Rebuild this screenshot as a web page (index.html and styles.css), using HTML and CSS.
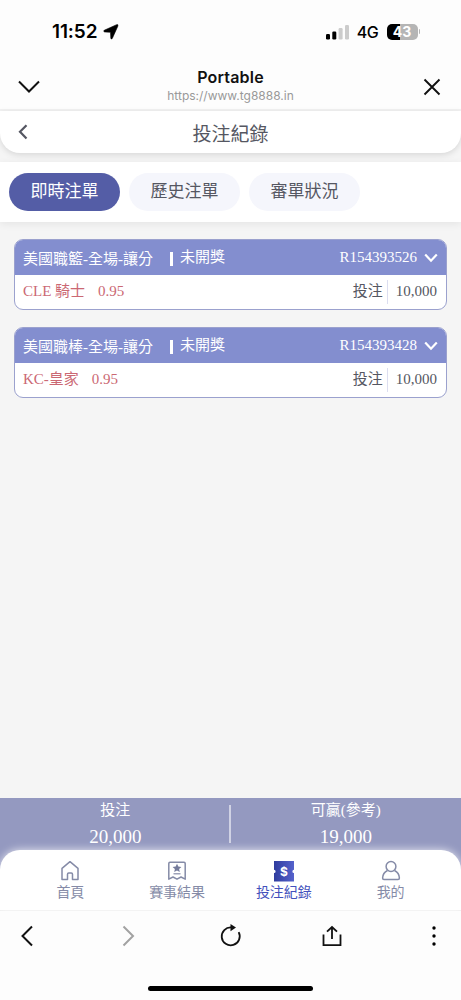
FILE: index.html
```html
<!DOCTYPE html>
<html lang="zh-Hant">
<head>
  <meta charset="UTF-8" />
  <meta name="viewport" content="width=device-width, initial-scale=1" />
  <title>投注紀錄</title>
  <link rel="stylesheet" href="styles.css">
</head>
<body>

  <div class="statusBar">
    <div class="clock">11:52</div>
    <svg class="location" width="16" height="16" viewBox="0 0 16 16"><path d="M1.200 6.300 13.600 .7Q15.400 .2 14.900 2L9.300 14.400Q8.300 15.800 7.800 14.200L7.500 8.300 1.500 7.900Q0 7.300 1.200 6.300Z" fill="#000" stroke="#000" stroke-width=".6"/></svg>
    <svg class="signal" width="23" height="16" viewBox="0 0 23 16">
      <rect x="0" y="10" width="4" height="5.500" rx="1.200"/>
      <rect x="6.300" y="7.500" width="4" height="8" rx="1.200"/>
      <rect x="12.600" y="4" width="4" height="11.500" rx="1.200" fill="#ccc"/>
      <rect x="19" y="1" width="4" height="14.500" rx="1.200" fill="#ccc"/>
    </svg>
    <div class="network">4G</div>
    <div class="battery">43</div>
    <div class="batteryTip"></div>
  </div>

  <header class="browserTop">
    <svg width="22" height="14" viewBox="0 0 22 14"><path d="M1 2.500 11 12.500 21 2.500" fill="none" stroke="#111" stroke-width="2"/></svg>
    <div class="siteInfo">
      <div class="siteName">Portable</div>
      <div class="siteUrl">https://www.tg8888.in</div>
    </div>
    <svg width="22" height="20" viewBox="0 0 22 20"><path d="M3.500 3.500 18.500 18.500M18.500 3.500 3.500 18.500" fill="none" stroke="#111" stroke-width="1.900"/></svg>
  </header>

  <main class="pagina">
    <div class="titleBar">
      <svg width="10" height="16" viewBox="0 0 10 16"><path d="M8.500 1.200 2 7.800 8.500 14.400" fill="none" stroke="#555762" stroke-width="2.200"/></svg>
      <h1>投注紀錄</h1>
    </div>

    <div class="tabs">
      <div class="tab activo">即時注單</div>
      <div class="tab">歷史注單</div>
      <div class="tab">審單狀況</div>
    </div>

    <section class="lista">
      <div class="ticket">
        <div class="ticketHead">
          <span class="liga">美國職籃-全場-讓分</span>
          <span class="estado">未開獎</span>
          <span class="numero">R154393526</span>
          <svg width="14" height="10" viewBox="0 0 14 10"><path d="M1.200 1.500 7 7.700 12.800 1.500" fill="none" stroke="#fff" stroke-width="2.200"/></svg>
        </div>
        <div class="ticketBody">
          <span class="equipo">CLE 騎士</span>
          <span class="cuota">0.95</span>
          <span class="etiqueta">投注</span>
          <span class="monto">10,000</span>
        </div>
      </div>

      <div class="ticket">
        <div class="ticketHead">
          <span class="liga">美國職棒-全場-讓分</span>
          <span class="estado">未開獎</span>
          <span class="numero">R154393428</span>
          <svg width="14" height="10" viewBox="0 0 14 10"><path d="M1.200 1.500 7 7.700 12.800 1.500" fill="none" stroke="#fff" stroke-width="2.200"/></svg>
        </div>
        <div class="ticketBody">
          <span class="equipo">KC-皇家</span>
          <span class="cuota">0.95</span>
          <span class="etiqueta">投注</span>
          <span class="monto">10,000</span>
        </div>
      </div>
    </section>

    <div class="totales">
      <div class="total">
        <div class="totalLabel">投注</div>
        <div class="totalValor">20,000</div>
      </div>
      <div class="total">
        <div class="totalLabel">可贏(參考)</div>
        <div class="totalValor">19,000</div>
      </div>
    </div>

    <nav class="menu">
      <div class="menuItem">
        <svg width="22" height="22" viewBox="0 0 22 22"><path d="M3 8.300 11 1.700 19 8.300V19.500H13.500V14.200Q13.500 13 12.300 13H9.700Q8.500 13 8.500 14.200V19.500H3Z" fill="none" stroke="#858ba7" stroke-width="1.500" stroke-linejoin="round"/></svg>
        <span>首頁</span>
      </div>
      <div class="menuItem">
        <svg width="22" height="22" viewBox="0 0 22 22"><path d="M4 2.200H18Q19.200 2.200 19.200 3.400V19.200L15 17 11 19.200 7 17 2.800 19.200V3.400Q2.800 2.200 4 2.200Z" fill="none" stroke="#858ba7" stroke-width="1.500" stroke-linejoin="round"/><path d="M11 3.800 12.300 6.600 15.400 7 13.100 9 13.800 12 11 10.500 8.200 12 8.900 9 6.600 7 9.700 6.600Z" fill="#747b9b"/><path d="M7.500 13.800H14.500" stroke="#858ba7" stroke-width="1.200"/></svg>
        <span>賽事結果</span>
      </div>
      <div class="menuItem activo">
        <svg width="22" height="22" viewBox="0 0 22 22">
          <defs><linearGradient id="ticketFondo" x1="0" y1="0" x2="1" y2="0"><stop offset="0" stop-color="#2f3c9e"/><stop offset="1" stop-color="#5562cc"/></linearGradient></defs>
          <path d="M1 1H21V9.800A1.600 1.600 0 0 0 21 13V21.500H1V13A1.600 1.600 0 0 0 1 9.800Z" fill="url(#ticketFondo)"/>
          <text x="11" y="15.500" text-anchor="middle" class="dolar">$</text>
        </svg>
        <span>投注紀錄</span>
      </div>
      <div class="menuItem">
        <svg width="22" height="22" viewBox="0 0 22 22"><circle cx="11" cy="6.500" r="4.900" fill="none" stroke="#858ba7" stroke-width="1.500"/><path d="M7.500 10.500Q2.800 12.800 2.600 18Q2.600 19.500 4 19.500H18Q19.400 19.500 19.400 18Q19.200 12.800 14.500 10.500" fill="none" stroke="#858ba7" stroke-width="1.500"/></svg>
        <span>我的</span>
      </div>
    </nav>
  </main>

  <footer class="browserBottom">
    <div class="botones">
      <svg width="24" height="24" viewBox="0 0 24 24"><path d="M17 2.500 7.500 12 17 21.500" fill="none" stroke="#111" stroke-width="2"/></svg>
      <svg width="24" height="24" viewBox="0 0 24 24"><path d="M6.500 2.500 16 12 6.500 21.500" fill="none" stroke="#a2a2a2" stroke-width="2"/></svg>
      <svg width="24" height="24" viewBox="0 0 24 24"><path d="M12.500 3.400A9 9 0 1 0 19.700 8.200" fill="none" stroke="#111" stroke-width="1.800"/><path d="M11.500 0 17 3.500 11.500 7.200Z" fill="#111"/></svg>
      <svg width="24" height="24" viewBox="0 0 24 24"><path d="M3.500 10.500V21.200H20.500V10.500M12 15V3.500M7 7.700 12 3 17 7.700" fill="none" stroke="#111" stroke-width="1.800"/></svg>
      <svg width="24" height="24" viewBox="0 0 24 24"><circle cx="12" cy="4" r="1.700"/><circle cx="12" cy="12" r="1.700"/><circle cx="12" cy="20" r="1.700"/></svg>
    </div>
    <div class="homeBar"></div>
  </footer>

</body>
</html>
```
FILE: styles.css
```css
* {
  box-sizing: border-box;
}
body {
  margin: 0;
  height: 1000px;
  display: flex;
  flex-direction: column;
  background-color: #fdfdfd;
  color: #555762;
  font-family: "Liberation Serif", "Noto Sans CJK TC", serif;
  overflow: hidden;
}
svg {
  display: block;
  flex: none;
}

/* barra de estado */
.statusBar {
  height: 63px;
  display: flex;
  align-items: center;
  padding: 0 41px 0 52px;
  font-family: Inter, sans-serif;
  color: #000;
}
.clock {
  font-size: 19px;
  font-weight: 600;
  letter-spacing: -0.1px;
}
.location {
  margin-left: 6px;
}
.signal {
  margin-left: auto;
}
.network {
  margin-left: 8px;
  font-size: 16px;
  font-weight: 500;
  letter-spacing: -0.3px;
}
.battery {
  width: 31px;
  height: 16px;
  margin-left: 8px;
  border-radius: 5px;
  background: linear-gradient(90deg, #000 43%, #b5b5b5 43%);
  color: #fff;
  font-size: 14px;
  font-weight: 700;
  line-height: 16px;
  text-align: center;
}
.batteryTip {
  width: 1.5px;
  height: 5px;
  margin-left: 1px;
  border-radius: 0 2px 2px 0;
  background-color: #b5b5b5;
}

/* cabecera del navegador */
.browserTop {
  height: 48px;
  display: flex;
  align-items: center;
  justify-content: space-between;
  padding: 0 18px;
  border-bottom: 2px solid #f2f2f2;
  font-family: Inter, sans-serif;
}
.siteInfo {
  text-align: center;
}
.siteName {
  color: #111;
  font-size: 16px;
  font-weight: 600;
  line-height: 19px;
  letter-spacing: 0.2px;
}
.siteUrl {
  color: #999;
  font-size: 12px;
  line-height: 17px;
}

.pagina {
  height: 799px;
  display: flex;
  flex-direction: column;
  background-color: #f5f5f5;
}
.titleBar {
  height: 42px;
  display: flex;
  align-items: center;
  padding: 0 18px;
  background-color: #fff;
  border-radius: 0 0 20px 20px;
  box-shadow: 0 2px 6px rgba(0, 0, 0, 0.12);
}
.titleBar h1 {
  flex: 1;
  margin: 6px 10px 0 0;
  text-align: center;
  font-size: 19px;
  font-weight: 400;
  line-height: 28px;
}

.tabs {
  height: 60px;
  margin-top: 9px;
  padding: 11px 9px;
  display: flex;
  gap: 9px;
  background-color: #fff;
  box-shadow: 0 2px 8px rgba(0, 0, 0, 0.07);
}
.tab {
  width: 111px;
  height: 38px;
  border-radius: 19px;
  background-color: #f5f6fc;
  font-size: 17px;
  line-height: 38px;
  text-align: center;
}
.tab.activo {
  background-color: #545da6;
  color: #fff;
}

/* apuestas */
.lista {
  flex: 1;
  display: flex;
  flex-direction: column;
  gap: 17px;
  padding: 17px 14px;
}
.ticket {
  height: 71px;
  border: 1px solid #9ba1ce;
  border-radius: 9px;
  background-color: #fff;
  overflow: hidden;
  font-size: 15px;
}
.ticketHead {
  height: 35px;
  display: flex;
  align-items: center;
  padding: 0 8px;
  background-color: #838ecf;
  color: #fff;
}
.liga {
  line-height: 22px;
  margin-top: 2px;
}
.estado {
  display: flex;
  align-items: center;
  gap: 7px;
  margin-left: 17px;
  margin-top: -1px;
  line-height: 22px;
}
.estado::before {
  content: "";
  width: 3px;
  height: 14px;
  margin-top: 4px;
  background-color: #fff;
}
.numero {
  margin-left: auto;
  margin-right: 7px;
}
.ticketBody {
  height: 34px;
  display: flex;
  align-items: center;
  padding: 0 9px 0 8px;
  line-height: 24px;
}
.equipo, .cuota {
  margin-top: -2px;
  color: #cb6873;
}
.cuota {
  margin-left: 13px;
}
.etiqueta {
  margin-left: auto;
  margin-top: -3px;
}
.monto {
  height: 24px;
  margin-left: 4px;
  padding-left: 8px;
  border-left: 1px solid #dcdef0;
  line-height: 23px;
}

/* totales */
.totales {
  height: 72px;
  margin-bottom: -20px;
  display: flex;
  background-color: #9499c0;
  color: #fff;
}
.total {
  flex: 1;
  text-align: center;
}
.total:first-child {
  background: linear-gradient(#d0d2e4, #d0d2e4) right 7px / 2px 38px no-repeat;
}
.totalLabel {
  height: 24px;
  font-size: 15px;
  line-height: 25px;
}
.totalValor {
  font-size: 19px;
  line-height: 30px;
}
.menu {
  position: relative;
  height: 60px;
  display: flex;
  padding: 10px 17px 0;
  background-color: #fff;
  border-radius: 20px 20px 0 0;
  box-shadow: 0 0 8px rgba(255, 255, 255, 0.8);
}
.menuItem {
  flex: 1;
  display: flex;
  flex-direction: column;
  align-items: center;
  color: #858ba7;
  font-size: 14px;
  line-height: 21px;
}
.menuItem.activo {
  color: #4350bc;
}
.dolar {
  font-family: Inter, sans-serif;
  font-size: 12px;
  font-weight: 700;
  fill: #fff;
}

.browserBottom {
  height: 90px;
  border-top: 1px solid #ededed;
}
.botones {
  display: flex;
  justify-content: space-between;
  padding: 13px 15px 0;
}
.homeBar {
  width: 165px;
  height: 5px;
  margin: 38px auto 0;
  border-radius: 3px;
  background-color: #000;
}
```
